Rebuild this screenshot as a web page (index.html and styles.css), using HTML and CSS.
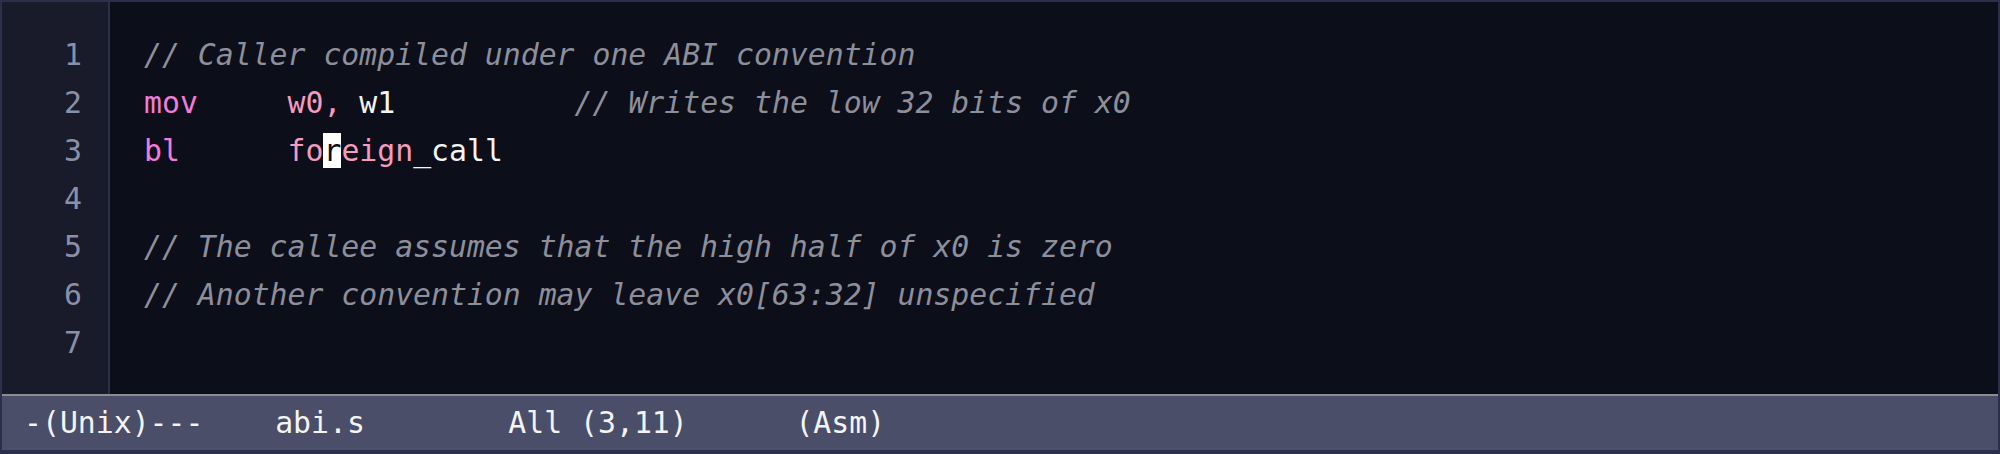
FILE: index.html
```html
<!DOCTYPE html>
<html>
<head>
<meta charset="utf-8">
<link rel="stylesheet" href="styles.css">
</head>
<body>
<div class="frame">
  <div class="editor">
    <div class="gutter">
      <div class="ln">1</div>
      <div class="ln">2</div>
      <div class="ln">3</div>
      <div class="ln">4</div>
      <div class="ln">5</div>
      <div class="ln">6</div>
      <div class="ln">7</div>
    </div>
    <div class="code">
      <div class="line"><span class="cm">// Caller compiled under one ABI convention</span></div>
      <div class="line"><span class="op">mov</span>     <span class="arg">w0,</span> <span class="pl">w1</span>          <span class="cm">// Writes the low 32 bits of x0</span></div>
      <div class="line"><span class="op">bl</span>      <span class="arg">fo</span><span class="cursor">r</span><span class="arg">eign</span><span class="pl">_call</span></div>
      <div class="line"> </div>
      <div class="line"><span class="cm">// The callee assumes that the high half of x0 is zero</span></div>
      <div class="line"><span class="cm">// Another convention may leave x0[63:32] unspecified</span></div>
      <div class="line"> </div>
    </div>
  </div>
  <div class="modeline">-(Unix)---    abi.s        All (3,11)      (Asm)</div>
</div>
</body>
</html>
```
FILE: styles.css
```css
html, body {
  margin: 0;
  padding: 0;
  background: #2b2f4c;
}
.frame {
  width: 2000px;
  height: 454px;
  box-sizing: border-box;
  border: 2px solid #2b2f4c;
  display: flex;
  flex-direction: column;
  font-family: "DejaVu Sans Mono", "Liberation Mono", monospace;
  font-size: 29.8px;
}
.editor {
  height: 392px;
  display: flex;
  background: #0c0e1a;
}
.gutter {
  width: 108px;
  box-sizing: border-box;
  border-right: 2px solid #2c3048;
  background: #191b2b;
  color: #8a90a8;
  text-align: right;
  padding: 29px 26px 0 0;
}
.ln, .line {
  height: 48px;
  line-height: 48px;
}
.code {
  flex: 1;
  padding: 29px 0 0 34px;
  color: #f2f2f2;
}
.line {
  white-space: pre;
}
.cm {
  color: #8d8f9a;
  font-style: italic;
}
.op {
  color: #f07ddc;
}
.arg {
  color: #f59cbc;
}
.pl {
  color: #f4f4f4;
}
.cursor {
  background: #ffffff;
  color: #0c0e1a;
}
.modeline {
  height: 56px;
  box-sizing: border-box;
  border-top: 2px solid #8c8c92;
  background: #4a4e68;
  color: #f4f4f6;
  line-height: 54px;
  padding-left: 22px;
  white-space: pre;
}
```
